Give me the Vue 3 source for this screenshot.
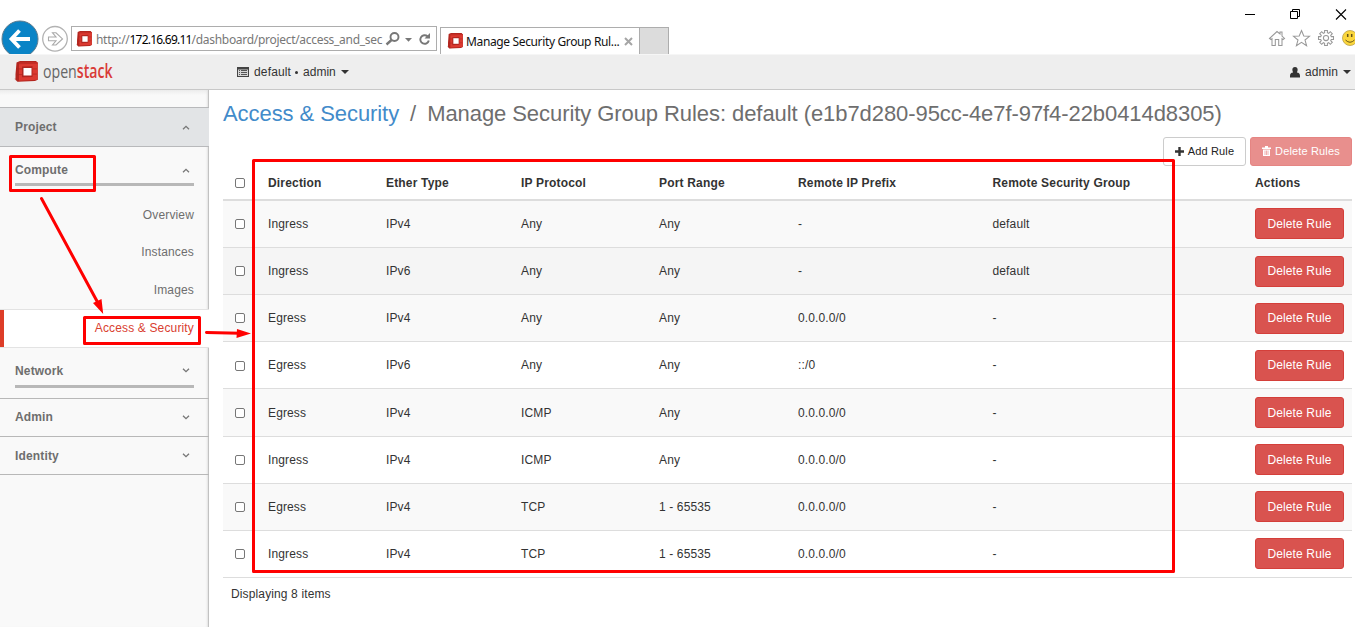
<script setup>
const columns = ['Direction', 'Ether Type', 'IP Protocol', 'Port Range', 'Remote IP Prefix', 'Remote Security Group', 'Actions']
const rules = [
  ['Ingress', 'IPv4', 'Any', 'Any', '-', 'default'],
  ['Ingress', 'IPv6', 'Any', 'Any', '-', 'default'],
  ['Egress', 'IPv4', 'Any', 'Any', '0.0.0.0/0', '-'],
  ['Egress', 'IPv6', 'Any', 'Any', '::/0', '-'],
  ['Egress', 'IPv4', 'ICMP', 'Any', '0.0.0.0/0', '-'],
  ['Ingress', 'IPv4', 'ICMP', 'Any', '0.0.0.0/0', '-'],
  ['Egress', 'IPv4', 'TCP', '1 - 65535', '0.0.0.0/0', '-'],
  ['Ingress', 'IPv4', 'TCP', '1 - 65535', '0.0.0.0/0', '-'],
]
const computeItems = ['Overview', 'Instances', 'Images', 'Access & Security']
</script>

<template>
  <div class="window">
    <svg class="defs" width="0" height="0" aria-hidden="true">
      <symbol id="cube" viewBox="0 0 24 23" preserveAspectRatio="none">
        <path d="M0 19 L3 17 V20.500 L7 22 L3 22Z" fill="#d9c4c2" />
        <path d="M2.500 1.500 L6 0 L22 0 L23.800 2 V20 L21 21.500 L3.500 22.300 L1.500 20 V14 L2 8Z" fill="#b3261f" />
        <path d="M5 2 L23.500 1.500 V20 L5 21Z" fill="#dc3a31" />
        <path d="M5 2 L23.500 1.500 V3 L5 3.500Z" fill="#c22d26" />
        <path d="M3 8.500 H8 M3 14.500 H8 M19 8.500 H23 M19 14 H23" stroke="#ab2620" stroke-width=".7" />
        <path d="M8 6 L18.500 5.500 V17 L8 17.500Z" fill="#b02620" />
        <path d="M9.500 7.500 H17.500 V15.500 H9.500Z" fill="#fff" />
      </symbol>
    </svg>

    <header class="chrome">
      <svg class="nav" width="71" height="36" viewBox="0 0 71 36">
        <circle cx="20" cy="21" r="18" fill="#0a84c6" stroke="#5d7c8e" stroke-width="1" />
        <path d="M30 21 H12 M19.500 12.500 L11.500 21 L19.500 29.500" fill="none" stroke="#fff" stroke-width="3.800" />
        <circle cx="55" cy="20.800" r="12.300" fill="#fff" stroke="#b2b2b2" stroke-width="1.300" />
        <path d="M48.500 19 H56 L52.500 14.800 H56 L62.500 20.900 L56 27 H52.500 L56 22.800 H48.500Z" fill="#fff" stroke="#a9a9a9" stroke-width="1.100" />
      </svg>
      <div class="address">
        <svg class="fav" width="16" height="16"><use href="#cube" width="16" height="16" /></svg>
        <span class="url">http://<b>172.16.69.11</b>/dashboard/project/access_and_sec</span>
        <svg class="tools" width="50" height="22" viewBox="0 0 50 22">
          <circle cx="10.500" cy="9" r="4" fill="none" stroke="#777" stroke-width="1.900" />
          <path d="M7.500 12 L2.500 16.500" stroke="#777" stroke-width="2.400" />
          <path d="M21 10 H28 L24.500 13.700Z" fill="#777" />
          <path d="M43.500 8.300 A4.300 4.300 0 1 0 44.800 12.500" fill="none" stroke="#777" stroke-width="1.900" />
          <path d="M46 5 V10.500 H40.500Z" fill="#777" />
        </svg>
      </div>
      <div class="tab">
        <svg class="fav" width="16" height="16"><use href="#cube" width="16" height="16" /></svg>
        <span class="tab-title">Manage Security Group Rul...</span>
        <svg width="9" height="9" viewBox="0 0 9 9"><path d="M1 1 L8 8 M8 1 L1 8" stroke="#a5a5a5" stroke-width="2" /></svg>
      </div>
      <div class="newtab"></div>
      <svg class="controls" width="125" height="54" viewBox="0 0 125 54">
        <path d="M15 14.500 H25" stroke="#000" />
        <path d="M60.500 11.500 H67.500 V18.500 H60.500Z M62.500 11 V9.500 H69.500 V16.500 H68" fill="none" stroke="#000" />
        <path d="M106 9.500 L116 19.500 M116 9.500 L106 19.500" stroke="#000" stroke-width="1.100" />
        <g fill="none" stroke="#989898" stroke-width="1.050">
          <path d="M39.500 38.500 L47 31.500 L50 34 V32 H52 V36 L54.500 38.500 L53 39.500 L52 38.800 V45.500 H48.700 V39.500 H45.300 V45.500 H42 V38.800 L41 39.500Z" />
          <path d="M71.500 30.500 L73.800 36 L79.500 36.300 L75 40 L76.600 45.700 L71.500 42.400 L66.400 45.700 L68 40 L63.500 36.300 L69.200 36Z" />
          <circle cx="96" cy="38" r="2.600" />
          <path d="M94.600 30.500 H97.400 V32.700 L98.700 33.300 L100.300 31.700 L102.300 33.700 L100.700 35.300 L101.300 36.600 H103.500 V39.400 H101.300 L100.700 40.700 L102.300 42.300 L100.300 44.300 L98.700 42.700 L97.400 43.300 V45.500 H94.600 V43.300 L93.300 42.700 L91.700 44.300 L89.700 42.300 L91.300 40.700 L90.700 39.400 H88.500 V36.600 H90.700 L91.300 35.300 L89.700 33.700 L91.700 31.700 L93.300 33.300 L94.600 32.700Z" />
        </g>
        <circle cx="120" cy="38" r="7.500" fill="#fbd63c" stroke="#b9a046" stroke-width=".8" />
        <path d="M117.700 34 V37 M121.700 34 V37" stroke="#65551a" stroke-width="1.500" />
        <path d="M115.500 40 Q120 44.500 124.500 40" fill="none" stroke="#65551a" />
      </svg>
    </header>

    <nav class="topbar">
      <svg class="brand" width="120" height="34" viewBox="0 0 120 34">
        <use href="#cube" x="14" y="6" width="24" height="21.500" />
        <text transform="translate(43 22.500) scale(.745 1)" class="logo" fill="#666">open<tspan class="logo-b" fill="#d93a36">stack</tspan></text>
      </svg>
      <div class="context">
        <svg width="12" height="10" viewBox="0 0 12 10">
          <path d="M0 0 H12 V10 H0Z" fill="#444" /><path d="M1 2.500 H11 V9 H1Z" fill="#d5d5d5" />
          <path d="M2 3.500 H3 M4 3.500 H10 M2 5.500 H3 M4 5.500 H10 M2 7.500 H3 M4 7.500 H10" stroke="#555" />
        </svg>
        <span class="domain">default</span><i class="dot"></i><span>admin</span><i class="caret"></i>
      </div>
      <div class="user">
        <svg width="10" height="11" viewBox="0 0 10 11"><path d="M5 0 C7 0 7.900 1.500 7.600 3.200 C7.300 4.700 7 5 6.900 5.500 C9 5.900 10 6.500 10 9 V10.500 H0 V9 C0 6.500 1 5.900 3.100 5.500 C3 5 2.700 4.700 2.400 3.200 C2.100 1.500 3 0 5 0Z" fill="#333" /></svg>
        <span>admin</span><i class="caret"></i>
      </div>
    </nav>

    <div class="body">
      <aside class="sidebar">
        <div class="panel project"><span>Project</span><svg class="chev" viewBox="0 0 8 5"><path d="M1 4.300 L4 1.300 L7 4.300" /></svg></div>
        <div class="group compute"><span>Compute</span><svg class="chev" viewBox="0 0 8 5"><path d="M1 4.300 L4 1.300 L7 4.300" /></svg></div>
        <ul class="items">
          <li v-for="item in computeItems" :key="item" :class="{ active: item === 'Access & Security' }"><span>{{ item }}</span></li>
        </ul>
        <div class="group network"><span>Network</span><svg class="chev" viewBox="0 0 8 5"><path d="M1 .7 L4 3.700 L7 .7" /></svg></div>
        <div class="panel closed"><span>Admin</span><svg class="chev" viewBox="0 0 8 5"><path d="M1 .7 L4 3.700 L7 .7" /></svg></div>
        <div class="panel closed last"><span>Identity</span><svg class="chev" viewBox="0 0 8 5"><path d="M1 .7 L4 3.700 L7 .7" /></svg></div>
      </aside>

      <main class="content">
        <h1><a>Access &amp; Security</a><span class="slash">/</span><span class="page">Manage Security Group Rules: default (e1b7d280-95cc-4e7f-97f4-22b0414d8305)</span></h1>
        <div class="actions">
          <button class="btn add"><svg width="9" height="9" viewBox="0 0 9 9"><path d="M4.500 0 V9 M0 4.500 H9" stroke="#333" stroke-width="2.400" /></svg>Add Rule</button>
          <button class="btn remove">
            <svg width="9" height="10" viewBox="0 0 9 10"><path d="M0 1.500 H3 V0 H6 V1.500 H9 V3 H0Z M1 3.500 H8 V10 H1Z" fill="#fff" /><path d="M3 4.500 V9 M4.500 4.500 V9 M6 4.500 V9" stroke="#e88f8d" stroke-width=".7" /></svg>Delete Rules
          </button>
        </div>
        <div class="table">
          <div class="row head">
            <span><i class="check"></i></span>
            <span v-for="c in columns" :key="c">{{ c }}</span>
          </div>
          <div v-for="(r, i) in rules" :key="i" class="row rule" :class="{ odd: i % 2 === 0, hover: i === 1 }">
            <span><i class="check"></i></span>
            <span v-for="(cell, j) in r" :key="j">{{ cell }}</span>
            <button class="del">Delete Rule</button>
          </div>
        </div>
        <div class="count">Displaying 8 items</div>
      </main>
    </div>

    <svg class="marks" width="1355" height="627" viewBox="0 0 1355 627">
      <g fill="none" stroke="#f00" stroke-width="3" stroke-linejoin="round">
        <rect x="10.500" y="156.500" width="84" height="34" />
        <rect x="84.500" y="317.500" width="115" height="26" />
        <rect x="253.500" y="160.500" width="920" height="411" />
        <path d="M41.500 198.500 L98 303 M206.500 332.500 L240 333.300" stroke-linecap="round" />
      </g>
      <path d="M93 303 L101.500 299 L103.200 314Z M237 329 L251 333.500 L236.500 338Z" fill="#f00" />
    </svg>
  </div>
</template>

<style>
body { margin: 0; background: #fff; }
</style>

<style scoped>
* { box-sizing: border-box; }
.window { position: relative; width: 1355px; height: 627px; overflow: hidden; background: #fff; color: #333; font: 12px "Liberation Sans", Arial, sans-serif; display: flex; flex-direction: column; }
.defs { position: absolute; }
svg { flex: none; display: block; }
.chrome { height: 54px; display: flex; align-items: flex-end; font-family: "Noto Sans", "Open Sans", sans-serif; flex: none; }
.address { width: 366px; height: 25px; margin-bottom: 3px; border: 1px solid #adadad; display: flex; align-items: center; padding-left: 4px; }
.url { margin: 1px 0 0 4px; width: 288px; white-space: nowrap; color: #777; letter-spacing: -.3px; }
.url b { font-weight: 400; color: #000; letter-spacing: -.78px; }
.tab { margin-left: 3px; width: 200px; height: 27px; border: 1px solid #adadad; border-bottom: 0; display: flex; align-items: center; padding-left: 6px; }
.tab-title { width: 158px; margin: 1px 0 0 3px; color: #111; white-space: nowrap; letter-spacing: -.36px; }
.newtab { width: 29px; height: 27px; background: #dcdcdc; border: 1px solid #adadad; border-width: 1px 1px 0 0; }
.controls { margin-left: auto; }
.topbar { height: 36px; flex: none; border-top: 1px solid #f6f6f6; border-bottom: 1px solid #c8c8c8; background: #eee; display: flex; align-items: center; }
.brand { overflow: visible; }
.logo { font: 19px "Open Sans", sans-serif; }
.logo-b { font-weight: 600; }
.context { display: flex; align-items: center; margin-left: 117px; }
.domain { margin-left: 5px; letter-spacing: .15px; }
.dot { width: 3px; height: 3px; border-radius: 50%; background: #333; margin: 1px 5px 0 4px; }
.caret { margin-left: 5px; border: 4px solid transparent; border-top-color: #333; border-bottom: 0; }
.user { margin-left: auto; margin-right: 4px; display: flex; align-items: center; letter-spacing: .08px; }
.user span { margin-left: 5px; }
.body { flex: 1; display: flex; min-height: 0; }
.sidebar { width: 209px; background: #f9f9f9; padding-top: 17px; color: #6e6e6e; background-image: linear-gradient(#ececec, #f9f9f9 5px); box-shadow: inset -1px 0 #c2c2c2, inset -3px 0 2px -1px #e2e2e2; }
.panel, .group { display: flex; justify-content: space-between; font-weight: 700; letter-spacing: .15px; }
.chev { width: 8px; height: 5px; fill: none; stroke: #777; stroke-width: 1.300; }
.project { height: 40px; background: #e2e4e6; border: 1px solid #b8b9bb; border-width: 1px 0; padding: 0 19.500px 0 15px; align-items: center; }
.group { margin: 0 15px; padding-right: 4.500px; align-items: center; border-bottom: 3px solid #b8b8b8; }
.compute { height: 39px; padding-top: 10px; }
.items { list-style: none; margin: 0; padding: 10px 0 0; }
.items li { height: 37.670px; display: flex; justify-content: flex-end; align-items: center; padding-right: 15px; letter-spacing: .15px; }
.items li.active { height: 39px; color: #d9402f; background: #fff; border: 1px solid #e3e3e3; border-width: 1px 0; box-shadow: inset 4px 0 #dd3d28; }
.network { height: 40px; padding-top: 9px; }
.closed { height: 38px; padding: 0 19.500px 0 15px; align-items: center; border-bottom: 1px solid #b8b8b8; }
.last span { margin-top: 2px; }
.network + .closed { margin-top: 10px; height: 39px; border-top: 1px solid #b8b8b8; }
.content { flex: 1; padding: 0 3px 0 14px; }
h1 { margin: 0; height: 47px; font-size: 22px; font-weight: 400; line-height: 47px; letter-spacing: -.07px; white-space: nowrap; color: #6e6e6e; }
h1 a { color: #428bca; }
.slash { margin: 0 11px; }
.actions { display: flex; justify-content: flex-end; gap: 4px; height: 29px; }
button { font-family: inherit; border-style: solid; border-width: 1px; border-radius: 3px; display: flex; align-items: center; justify-content: center; padding: 0; }
.btn { height: 29px; font-size: 11px; gap: 4px; padding-bottom: 1px; white-space: nowrap; letter-spacing: .15px; }
.add { width: 83px; border-color: #ccc; background: #fff; color: #222; }
.remove { width: 102px; border-color: #e58583; background: #e88f8d; color: #fff; }
.row { display: grid; grid-template-columns: 45px 118px 135px 138px 139px 194.500px 262.500px 1fr; align-items: center; letter-spacing: .13px; }
.head { height: 34.800px; padding-top: 1px; border-bottom: 2px solid #ddd; font-weight: 700; letter-spacing: .18px; }
.rule { height: 47.170px; border-bottom: 1px solid #ddd; }
.odd { background: #f9f9f9; }
.hover { background: #f5f5f5; }
.check { display: block; width: 10px; height: 10px; border: 1px solid #777; border-radius: 2px; background: #fff; margin: .6px 0 0 12px; }
.del { width: 89px; height: 31px; background: #d9534f; border-color: #d43f3a; color: #fff; font-size: 12px; letter-spacing: .13px; }
.count { margin: 9px 0 0 8px; letter-spacing: .13px; }
.marks { position: absolute; left: 0; top: 0; pointer-events: none; }
</style>
